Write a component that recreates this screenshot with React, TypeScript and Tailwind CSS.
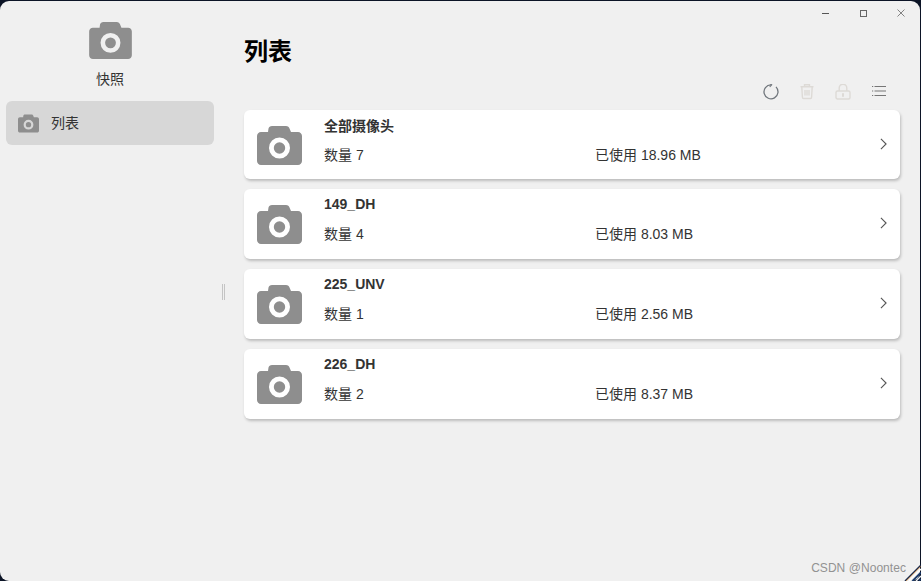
import React from 'react';

const groups = [
  { name: '全部摄像头', count: 7, used: '18.96 MB' },
  { name: '149_DH', count: 4, used: '8.03 MB' },
  { name: '225_UNV', count: 1, used: '2.56 MB' },
  { name: '226_DH', count: 2, used: '8.37 MB' },
];

const CameraIcon: React.FC<{ className?: string }> = ({ className }) => (
  <svg viewBox="0 0 45 39" className={className}>
    <path
      fillRule="evenodd"
      fill="#8e8e8e"
      d="M15 0h14c2 0 3 1 3.500 2.500L34 6h7c2.200 0 4 1.800 4 4v25c0 2.200-1.800 4-4 4H4c-2.200 0-4-1.800-4-4V10c0-2.200 1.800-4 4-4h7l.5-3.500C12 1 13 0 15 0ZM22.500 11.500a10.500 10.500 0 1 0 0 21 10.500 10.500 0 0 0 0-21Zm0 4.800a5.700 5.700 0 1 1 0 11.400 5.700 5.700 0 0 1 0-11.400Z"
    />
  </svg>
);

const ToolbarIcons: React.FC = () => (
  <div className="flex h-[36px] items-center justify-end gap-[20px] pr-[13px]">
    {/* refresh */}
    <svg viewBox="0 0 16 16" className="h-[16px] w-[16px]" fill="none" stroke="#70767c" strokeWidth="1.300">
      <path d="M8 0.800A7 7 0 1 0 13 2.900" />
      <path d="M6.300 -1 8.700 0.800 6.700 3" strokeWidth="1.100" />
    </svg>
    {/* delete, disabled */}
    <svg viewBox="0 0 16 16" className="h-[16px] w-[16px]" fill="none" stroke="#dddad6" strokeWidth="1.400">
      <path d="M1.500 2.800h13M5.500 2.800V0.800h5v2M2.800 2.800l.6 10.400c0 .8.500 1.300 1.300 1.300h6.600c.8 0 1.300-.5 1.300-1.300l.6-10.400M6 6v5.500M8 6v5.500M10 6v5.500" />
    </svg>
    {/* lock, disabled */}
    <svg viewBox="0 0 16 16" className="h-[16px] w-[16px]" fill="none" stroke="#dddad6" strokeWidth="1.400">
      <path d="M4.200 7V4a3.800 3.800 0 0 1 7.600 0V7" />
      <rect x="1" y="7" width="14" height="8" rx="1.500" />
      <path d="M8 9.300v3.500" strokeWidth="2" />
    </svg>
    {/* list */}
    <svg viewBox="0 0 16 16" className="h-[16px] w-[16px]" fill="none" stroke="#767676" strokeWidth="1.200">
      <path d="M3.500 2.500H15M3.500 7H15M3.500 11.500H15M1 2.500h1.200M1 7h1.200M1 11.500h1.200" />
    </svg>
  </div>
);

export default function App() {
  return (
    <div className="relative h-[581px] w-[921px] overflow-hidden bg-[#0c1426] pr-[1px] pt-[1px] font-['Liberation_Sans','Noto_Sans_CJK_SC',sans-serif]">
      <div className="relative flex h-full w-full rounded-[9px] bg-[#f0f0f0]">
        {/* Sidebar */}
        <aside className="flex w-[222px] shrink-0 flex-col">
          <div className="flex flex-col items-center pt-[21px]">
            <CameraIcon className="ml-[-1px] h-[37px] w-[43px]" />
            <div className="mr-[2px] mt-[11px] text-[14px] leading-[18px] text-[#333333]">快照</div>
          </div>
          <div className="ml-[6px] mt-[13px] flex h-[44px] w-[208px] items-center rounded-[6px] bg-[#d7d7d7] pl-[12px]">
            <CameraIcon className="h-[19px] w-[21px]" />
            <span className="ml-[12px] text-[14px] text-[#333333]">列表</span>
          </div>
        </aside>

        {/* Splitter */}
        <div className="flex w-[22px] shrink-0 items-start">
          <div className="mt-[283px] h-[16px] w-[3px] border-x border-[#c4c4c4]" />
        </div>

        {/* Main */}
        <main className="flex min-w-0 flex-1 flex-col pr-[20px]">
          <h1 className="mt-[35px] text-[24px] font-bold leading-[32px] text-black">列表</h1>
          <div className="mt-[6px]">
            <ToolbarIcons />
          </div>
          <div className="flex flex-col gap-[10px]">
            {groups.map((group, index) => (
              <div
                key={group.name}
                className={`flex items-start rounded-[6px] bg-white pl-[13px] pr-[13px] shadow-[1px_2px_3px_rgba(0,0,0,0.22)] ${
                  index === 0 ? 'h-[69px]' : 'h-[70px]'
                }`}
              >
                <CameraIcon className="mt-[16px] h-[39px] w-[45px] shrink-0" />
                <div className={`ml-[22px] flex h-full min-w-0 flex-1 flex-col ${index === 0 ? 'pt-[7px]' : 'pt-[6px]'}`}>
                  <div className="text-[14px] font-bold leading-[18px] text-[#333333]">{group.name}</div>
                  <div className={`flex text-[14px] leading-[18px] text-[#333333] ${index === 0 ? 'mt-[11px]' : 'mt-[12px]'}`}>
                    <span className="w-[271px]">数量 {group.count}</span>
                    <span>已使用 {group.used}</span>
                  </div>
                </div>
                <svg viewBox="0 0 8 14" className="mt-[28px] h-[12px] w-[7px] shrink-0" fill="none" stroke="#555555" strokeWidth="1.300">
                  <path d="M1 1l6 6-6 6" />
                </svg>
              </div>
            ))}
          </div>
        </main>

        {/* Window controls */}
        <div className="absolute right-0 top-0 flex h-[24px] items-center">
          <div className="flex w-[38px] justify-center">
            <div className="h-px w-[7px] bg-[#555555]" />
          </div>
          <div className="flex w-[38px] justify-center">
            <div className="h-[7px] w-[7px] border border-[#666666]" />
          </div>
          <div className="flex w-[38px] justify-center">
            <svg viewBox="0 0 8 8" className="h-[8px] w-[8px]" fill="none" stroke="#666666" strokeWidth="0.800">
              <path d="M0.500 0.500l7 7M7.500 0.500l-7 7" />
            </svg>
          </div>
        </div>

        <div className="absolute bottom-[5px] right-[14px] text-[12px] leading-[16px] tracking-[0.05px] text-[#929292]">
          CSDN @Noontec
        </div>
      </div>

      {/* Resize corner streaks */}
      <svg viewBox="0 0 18 18" className="absolute bottom-0 right-0 h-[18px] w-[18px]" fill="none">
        <path d="M2 18 18 2" stroke="#1b2a4a" strokeWidth="1.500" />
        <path d="M3.200 18 18 3.200" stroke="#d98a3a" strokeWidth="0.700" />
        <path d="M6 18 18 6" stroke="#ffffff" strokeWidth="1.500" />
        <path d="M9.500 18 18 9.500" stroke="#1b3a6a" strokeWidth="1.800" />
        <path d="M13 18 18 13" stroke="#e8eef6" strokeWidth="1.500" />
        <path d="M16 18 18 16" stroke="#1b3a6a" strokeWidth="1.500" />
      </svg>
    </div>
  );
}
